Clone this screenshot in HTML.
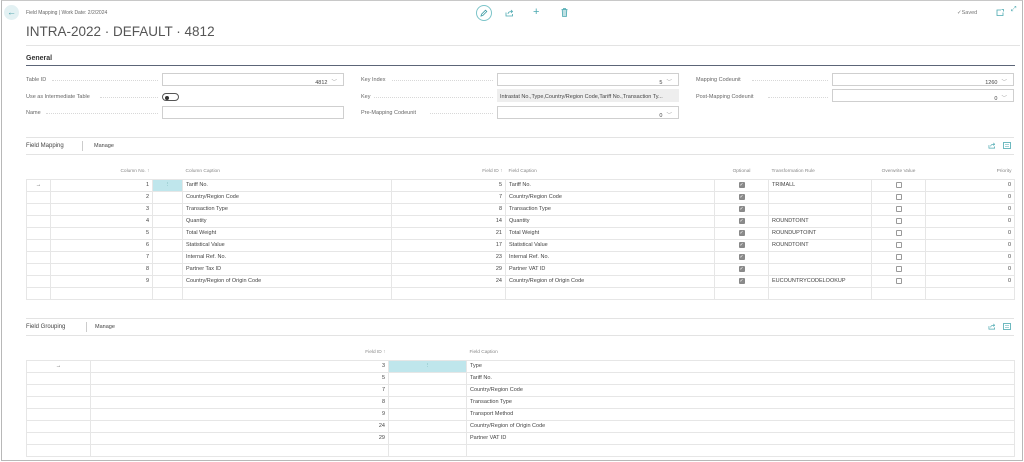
<!DOCTYPE html>
<html><head><meta charset="utf-8"><style>
*{margin:0;padding:0;box-sizing:border-box}
body{width:1024px;height:462px;background:#fff;font-family:"Liberation Sans",sans-serif;color:#333;position:relative;overflow:hidden}
.frame{position:absolute;left:1px;top:0;width:1022px;height:461px;border:1px solid #b8b8b8;border-top-color:#c8c8c8}
.a{position:absolute;white-space:nowrap}
.s{font-size:5.5px;color:#555}
.lbl{font-size:5.5px;color:#666}
.dots{position:absolute;border-bottom:1px dotted #d8d8d8;height:1px}
.inp{position:absolute;height:13px;border:1px solid #cfcfcf;background:#fff;font-size:5.5px;text-align:right;padding:4px 6px 0 0;color:#444}
.inp .ch{color:#999;margin-left:4px}
table{position:absolute;border-collapse:collapse;table-layout:fixed;font-size:5.5px;color:#444}
td{border:1px solid #e6e6e6;height:12px;padding:0 3px;white-space:nowrap;overflow:hidden}
th{font-weight:normal;color:#888;font-size:4.8px;height:14px;text-align:left;padding:0 3px}
.r{text-align:right}
.c{text-align:center}
.teal{background:#bfe6ec;color:#6aa;text-align:center}
.cb{display:inline-block;width:6px;height:6px;border:1px solid #999;border-radius:1px;vertical-align:middle;font-size:5px;line-height:5px;color:#fff;text-align:center}
.cb.on{background:#8a8a8a;border-color:#888}
.hl{position:absolute;height:1px;background:#e3e3e3}
</style></head><body>
<div class="frame"></div>
<div class="a" style="left:4px;top:5px;width:15px;height:15px;border-radius:50%;background:#e3f1f3;color:#3a9aa3;font-size:9px;text-align:center;line-height:14px">←</div>
<div class="a s" style="left:26px;top:10px;font-size:5px;color:#666">Field Mapping | Work Date: 2/2/2024</div>
<div class="a" style="left:26px;top:24px;font-size:13.5px;color:#555">INTRA-2022 · DEFAULT · 4812</div>
<div class="a" style="left:476px;top:5px;width:16px;height:16px;border:1px solid #7cc4c9;border-radius:50%"></div>
<svg class="a" style="left:480px;top:9px" width="8" height="8" viewBox="0 0 8 8"><path d="M1 7 L1.5 5.2 L5.5 1.2 L6.8 2.5 L2.8 6.5 Z" fill="none" stroke="#3a9aa3" stroke-width="0.8"/></svg>
<svg class="a" style="left:505px;top:9px" width="9" height="8" viewBox="0 0 9 8"><path d="M1 3.5 V7 H7.5 V5 M3 5 C3 3 5 2.5 7 2.5 M6 1 L7.5 2.5 L6 4" fill="none" stroke="#4aa8b0" stroke-width="0.8"/></svg>
<div class="a" style="left:533px;top:6px;font-size:11px;color:#4aa8b0">+</div>
<svg class="a" style="left:561px;top:8px" width="7" height="9" viewBox="0 0 7 9"><path d="M0.5 1.5 H6.5 M2.5 1.5 V0.5 H4.5 V1.5 M1.2 1.5 L1.6 8.5 H5.4 L5.8 1.5" fill="#bfe0e3" stroke="#4aa8b0" stroke-width="0.8"/></svg>
<div class="a" style="left:957px;top:10px;font-size:5.5px;color:#777">✓Saved</div>
<svg class="a" style="left:996px;top:9px" width="8" height="7" viewBox="0 0 8 7"><path d="M5 1 H1 V6.5 H7 V3.5 M5.5 0.5 H7.5 V2.5" fill="none" stroke="#4aa8b0" stroke-width="0.8"/></svg>
<div class="a" style="left:1011px;top:6px;font-size:7px;color:#4aa8b0">⤢</div>
<div class="hl" style="left:26px;top:45px;width:994px"></div>
<div class="a" style="left:26px;top:55px;font-size:7px;font-weight:bold;color:#333">General</div>
<div class="a" style="left:26px;top:65px;width:989px;height:1px;background:#5c6577"></div>

<div class="a lbl" style="left:26px;top:77px">Table ID</div><div class="dots" style="left:52px;top:80px;width:106px"></div>
<div class="inp" style="left:162px;top:73px;width:182px">4812<span class="ch">﹀</span></div>
<div class="a lbl" style="left:26px;top:94px">Use as Intermediate Table</div><div class="dots" style="left:100px;top:97px;width:58px"></div>
<div class="a" style="left:162px;top:93px;width:17px;height:8px;border:1px solid #555;border-radius:4px"><div style="position:absolute;left:1.5px;top:1.5px;width:4px;height:4px;border-radius:50%;background:#333"></div></div>
<div class="a lbl" style="left:26px;top:110px">Name</div><div class="dots" style="left:46px;top:113px;width:112px"></div>
<div class="inp" style="left:162px;top:106px;width:182px"></div>

<div class="a lbl" style="left:361px;top:77px">Key Index</div><div class="dots" style="left:392px;top:80px;width:101px"></div>
<div class="inp" style="left:497px;top:73px;width:182px">5<span class="ch">﹀</span></div>
<div class="a lbl" style="left:361px;top:94px">Key</div><div class="dots" style="left:374px;top:97px;width:119px"></div>
<div class="inp" style="left:497px;top:89px;width:182px;background:#eee;border-color:#eee;text-align:left;padding-left:2px">Intrastat No.,Type,Country/Region Code,Tariff No.,Transaction Ty...</div>
<div class="a lbl" style="left:361px;top:110px">Pre-Mapping Codeunit</div><div class="dots" style="left:430px;top:113px;width:63px"></div>
<div class="inp" style="left:497px;top:106px;width:182px">0<span class="ch">﹀</span></div>

<div class="a lbl" style="left:696px;top:77px">Mapping Codeunit</div><div class="dots" style="left:752px;top:80px;width:76px"></div>
<div class="inp" style="left:832px;top:73px;width:182px">1260<span class="ch">﹀</span></div>
<div class="a lbl" style="left:696px;top:94px">Post-Mapping Codeunit</div><div class="dots" style="left:768px;top:97px;width:60px"></div>
<div class="inp" style="left:832px;top:89px;width:182px">0<span class="ch">﹀</span></div>

<div class="hl" style="left:26px;top:137px;width:988px"></div>
<div class="a" style="left:26px;top:143px;font-size:6px;color:#444">Field Mapping</div>
<div class="a" style="left:82px;top:141px;width:1px;height:10px;background:#ccc"></div>
<div class="a" style="left:94px;top:143px;font-size:5.5px;color:#444">Manage</div>
<svg class="a" style="left:988px;top:142px" width="8" height="7" viewBox="0 0 9 8"><path d="M1 3.5 V7 H7.5 V5 M3 5 C3 3 5 2.5 7 2.5 M6 1 L7.5 2.5 L6 4" fill="none" stroke="#4aa8b0" stroke-width="0.8"/></svg>
<svg class="a" style="left:1003px;top:142px" width="8" height="7" viewBox="0 0 8 7"><rect x="0.5" y="0.5" width="7" height="6" fill="none" stroke="#4aa8b0" stroke-width="0.8"/><path d="M2 2.5 H6 M2 4.5 H6" stroke="#4aa8b0" stroke-width="0.6"/></svg>
<div class="hl" style="left:26px;top:154px;width:988px"></div>

<table style="left:26px;top:165px;width:988px">
<colgroup><col style="width:24px"><col style="width:102px"><col style="width:30px"><col style="width:209px"><col style="width:114px"><col style="width:209px"><col style="width:54px"><col style="width:103px"><col style="width:54px"><col style="width:89px"></colgroup>
<tr><th></th><th class="r">Column No. ↑</th><th></th><th>Column Caption</th><th class="r">Field ID ↑</th><th>Field Caption</th><th class="c">Optional</th><th>Transformation Rule</th><th class="c">Overwrite Value</th><th class="r">Priority</th></tr>
<tr><td class="c">→</td><td class="r">1</td><td class="teal">⋮</td><td>Tariff No.</td><td class="r">5</td><td>Tariff No.</td><td class="c"><span class="cb on">✓</span></td><td>TRIMALL</td><td class="c"><span class="cb"></span></td><td class="r">0</td></tr>
<tr><td></td><td class="r">2</td><td></td><td>Country/Region Code</td><td class="r">7</td><td>Country/Region Code</td><td class="c"><span class="cb on">✓</span></td><td></td><td class="c"><span class="cb"></span></td><td class="r">0</td></tr>
<tr><td></td><td class="r">3</td><td></td><td>Transaction Type</td><td class="r">8</td><td>Transaction Type</td><td class="c"><span class="cb on">✓</span></td><td></td><td class="c"><span class="cb"></span></td><td class="r">0</td></tr>
<tr><td></td><td class="r">4</td><td></td><td>Quantity</td><td class="r">14</td><td>Quantity</td><td class="c"><span class="cb on">✓</span></td><td>ROUNDTOINT</td><td class="c"><span class="cb"></span></td><td class="r">0</td></tr>
<tr><td></td><td class="r">5</td><td></td><td>Total Weight</td><td class="r">21</td><td>Total Weight</td><td class="c"><span class="cb on">✓</span></td><td>ROUNDUPTOINT</td><td class="c"><span class="cb"></span></td><td class="r">0</td></tr>
<tr><td></td><td class="r">6</td><td></td><td>Statistical Value</td><td class="r">17</td><td>Statistical Value</td><td class="c"><span class="cb on">✓</span></td><td>ROUNDTOINT</td><td class="c"><span class="cb"></span></td><td class="r">0</td></tr>
<tr><td></td><td class="r">7</td><td></td><td>Internal Ref. No.</td><td class="r">23</td><td>Internal Ref. No.</td><td class="c"><span class="cb on">✓</span></td><td></td><td class="c"><span class="cb"></span></td><td class="r">0</td></tr>
<tr><td></td><td class="r">8</td><td></td><td>Partner Tax ID</td><td class="r">29</td><td>Partner VAT ID</td><td class="c"><span class="cb on">✓</span></td><td></td><td class="c"><span class="cb"></span></td><td class="r">0</td></tr>
<tr><td></td><td class="r">9</td><td></td><td>Country/Region of Origin Code</td><td class="r">24</td><td>Country/Region of Origin Code</td><td class="c"><span class="cb on">✓</span></td><td>EUCOUNTRYCODELOOKUP</td><td class="c"><span class="cb"></span></td><td class="r">0</td></tr>
<tr><td></td><td></td><td></td><td></td><td></td><td></td><td></td><td></td><td></td><td></td></tr>
</table>

<div class="hl" style="left:26px;top:318px;width:988px"></div>
<div class="a" style="left:26px;top:324px;font-size:6px;color:#444">Field Grouping</div>
<div class="a" style="left:86px;top:322px;width:1px;height:10px;background:#ccc"></div>
<div class="a" style="left:95px;top:324px;font-size:5.5px;color:#444">Manage</div>
<svg class="a" style="left:988px;top:323px" width="8" height="7" viewBox="0 0 9 8"><path d="M1 3.5 V7 H7.5 V5 M3 5 C3 3 5 2.5 7 2.5 M6 1 L7.5 2.5 L6 4" fill="none" stroke="#4aa8b0" stroke-width="0.8"/></svg>
<svg class="a" style="left:1003px;top:323px" width="8" height="7" viewBox="0 0 8 7"><rect x="0.5" y="0.5" width="7" height="6" fill="none" stroke="#4aa8b0" stroke-width="0.8"/><path d="M2 2.5 H6 M2 4.5 H6" stroke="#4aa8b0" stroke-width="0.6"/></svg>
<div class="hl" style="left:26px;top:335px;width:988px"></div>

<table style="left:26px;top:346px;width:988px">
<colgroup><col style="width:64px"><col style="width:298px"><col style="width:78px"><col style="width:548px"></colgroup>
<tr><th></th><th class="r">Field ID ↑</th><th></th><th>Field Caption</th></tr>
<tr><td class="c">→</td><td class="r">3</td><td class="teal">⋮</td><td>Type</td></tr>
<tr><td></td><td class="r">5</td><td></td><td>Tariff No.</td></tr>
<tr><td></td><td class="r">7</td><td></td><td>Country/Region Code</td></tr>
<tr><td></td><td class="r">8</td><td></td><td>Transaction Type</td></tr>
<tr><td></td><td class="r">9</td><td></td><td>Transport Method</td></tr>
<tr><td></td><td class="r">24</td><td></td><td>Country/Region of Origin Code</td></tr>
<tr><td></td><td class="r">29</td><td></td><td>Partner VAT ID</td></tr>
<tr><td></td><td></td><td></td><td></td></tr>
</table>
</body></html>
